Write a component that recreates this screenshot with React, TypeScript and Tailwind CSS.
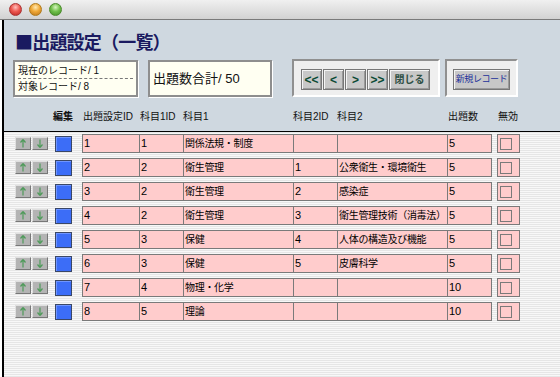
import React from 'react';

const rows = [
  { id: '1', s1: '1', n1: '関係法規・制度', s2: '', n2: '', q: '5' },
  { id: '2', s1: '2', n1: '衛生管理', s2: '1', n2: '公衆衛生・環境衛生', q: '5' },
  { id: '3', s1: '2', n1: '衛生管理', s2: '2', n2: '感染症', q: '5' },
  { id: '4', s1: '2', n1: '衛生管理', s2: '3', n2: '衛生管理技術（消毒法）', q: '5' },
  { id: '5', s1: '3', n1: '保健', s2: '4', n2: '人体の構造及び機能', q: '5' },
  { id: '6', s1: '3', n1: '保健', s2: '5', n2: '皮膚科学', q: '5' },
  { id: '7', s1: '4', n1: '物理・化学', s2: '', n2: '', q: '10' },
  { id: '8', s1: '5', n1: '理論', s2: '', n2: '', q: '10' },
];

function Arrow({ up }: { up: boolean }) {
  return (
    <div className="w-[16px] h-[13px] bg-[#b4b4b4] border border-t-[#e0e0e0] border-l-[#e0e0e0] border-r-[#777] border-b-[#777] flex items-center justify-center">
      <svg width="6" height="9" viewBox="0 0 6 9">
        {up ? (
          <path d="M3 0.5 L0.5 3.5 M3 0.5 L5.5 3.5 M3 0.5 V8.5" stroke="#4f9a5a" strokeWidth="1.2" fill="none" />
        ) : (
          <path d="M3 8.5 L0.5 5.5 M3 8.5 L5.5 5.5 M3 8.5 V0.5" stroke="#4f9a5a" strokeWidth="1.2" fill="none" />
        )}
      </svg>
    </div>
  );
}

function Cell({ w, text, first, jp }: { w: string; text: string; first?: boolean; jp?: boolean }) {
  return (
    <div className={`${w} ${first ? '' : '-ml-px'} h-[19px] bg-[#ffcccc] border border-[#7a7a7a] flex items-center pl-[1px] ${jp ? 'text-[10px] tracking-[-0.3px]' : 'text-[11px]'} leading-none text-black whitespace-nowrap overflow-hidden`}>
      {text}
    </div>
  );
}

function NavBtn({ label, w, small }: { label: string; w: string; small?: boolean }) {
  return (
    <div className={`${w} h-[21px] bg-[#c8c8c8] border border-[#777] shadow-[inset_1px_1px_0_#f4f4f4,inset_-1px_-1px_0_#9a9a9a] flex items-center justify-center whitespace-nowrap ${small ? 'text-[10px] text-[#2f4f45]' : 'text-[12px] text-[#0b4a34]'} font-bold leading-none`}>
      {label}
    </div>
  );
}

export default function App() {
  return (
    <div className="w-[560px] h-[377px] overflow-hidden bg-white font-['Liberation_Sans','Noto_Sans_CJK_JP',sans-serif]">
      {/* title bar */}
      <div className="h-[20px] border-b border-[#7a7a7a] bg-[linear-gradient(to_bottom,#f0f0f0,#d2d2d2)] flex items-center pl-[9px] gap-[7px]">
        <div className="w-[13px] h-[13px] rounded-full border border-[#a33] bg-[radial-gradient(circle_at_50%_30%,#ffc0bc_0%,#ee5a52_45%,#b8221c_100%)]" />
        <div className="w-[13px] h-[13px] rounded-full border border-[#b07a1a] bg-[radial-gradient(circle_at_50%_30%,#ffe9b0_0%,#f0a938_45%,#b9721a_100%)]" />
        <div className="w-[13px] h-[13px] rounded-full border border-[#4a8a2a] bg-[radial-gradient(circle_at_50%_30%,#d8f5c0_0%,#72c14c_45%,#3f8a22_100%)]" />
      </div>

      <div className="ml-[2px] border-l-2 border-black h-[357px]">
        {/* header area */}
        <div className="h-[112px] bg-[#cfd8e0] border-b border-black pt-[9px]">
          <div className="pl-[11px] h-[24px] flex items-center text-[18px] font-bold text-[#1a1a60] leading-none font-['Noto_Sans_CJK_JP',sans-serif] tracking-[-0.8px]">
            ■出題設定（一覧）
          </div>
          <div className="flex items-start mt-[6px] pl-[9px]">
            <div className="mt-[1px] w-[125px] h-[37px] bg-[#fffff2] border-2 border-[#8e8e8e] shadow-[1px_1px_0_#ffffff] px-[3px] flex flex-col text-[10px] leading-none text-[#111] whitespace-pre">
              <div className="h-[16px] flex items-center pt-[1px]">{'現在のレコード/ 1'}</div>
              <div className="border-t border-dashed border-[#777]" />
              <div className="flex-1 flex items-center">{'対象レコード/ 8'}</div>
            </div>
            <div className="mt-[1px] ml-[10px] w-[124px] h-[37px] bg-[#fffff2] border-2 border-[#8e8e8e] shadow-[1px_1px_0_#ffffff] pl-[3px] flex items-center text-[13px] leading-none text-[#111] whitespace-pre">
              {'出題数合計/ 50'}
            </div>
            <div className="ml-[20px] w-[148px] h-[38px] bg-[#efefef] border-2 border-t-[#909090] border-l-[#909090] border-r-white border-b-white pl-[7px] pt-[8px] flex gap-[1px]">
              <NavBtn label="<<" w="w-[21px]" />
              <NavBtn label="<" w="w-[21px]" />
              <NavBtn label=">" w="w-[21px]" />
              <NavBtn label=">>" w="w-[21px]" />
              <NavBtn label="閉じる" w="w-[41px]" small />
            </div>
            <div className="ml-[5px] w-[73px] h-[38px] bg-[#efefef] border-2 border-t-[#909090] border-l-[#909090] border-r-white border-b-white pl-[6px] pt-[8px] flex">
              <div className="w-[57px] h-[21px] bg-[#c8c8c8] border border-[#777] shadow-[inset_1px_1px_0_#f4f4f4,inset_-1px_-1px_0_#9a9a9a] flex items-center justify-center whitespace-nowrap text-[9px] tracking-[-0.4px] text-[#23309a] leading-none">
                新規レコード
              </div>
            </div>
          </div>
          <div className="flex mt-[14px] text-[10px] leading-[12px] text-[#111] whitespace-nowrap">
            <div className="w-[49px]" />
            <div className="w-[30px] font-bold">編集</div>
            <div className="w-[57px]">出題設定ID</div>
            <div className="w-[43px]">科目1ID</div>
            <div className="w-[110px]">科目1</div>
            <div className="w-[44px]">科目2ID</div>
            <div className="w-[111px]">科目2</div>
            <div className="w-[50px]">出題数</div>
            <div>無効</div>
          </div>
        </div>

        {/* rows */}
        <div className="h-[245px] pt-[2px] bg-[repeating-linear-gradient(to_bottom,#e6e6e6_0px,#e6e6e6_1px,#f8f8f8_1px,#f8f8f8_2px)] flex flex-col gap-[5px]">
          {rows.map((r) => (
            <div key={r.id} className="flex items-center h-[19px] pl-[11px]">
              <div className="flex gap-[1px]">
                <Arrow up />
                <Arrow up={false} />
              </div>
              <div className="ml-[7px] w-[17px] h-[16px] bg-[#3c6df7] border border-[#3a4766] shadow-[inset_1px_1px_0_#6f95ff]" />
              <div className="ml-[10px] flex">
                <Cell first w="w-[58px]" text={r.id} />
                <Cell w="w-[45px]" text={r.s1} />
                <Cell w="w-[111px]" text={r.n1} jp />
                <Cell w="w-[45px]" text={r.s2} />
                <Cell w="w-[111px]" text={r.n2} jp />
                <Cell w="w-[45px]" text={r.q} />
              </div>
              <div className="ml-[5px] w-[23px] h-[19px] bg-[#ffcccc] border border-[#7a7a7a] flex items-center pl-[2px]">
                <div className="w-[12px] h-[12px] border border-[#7a7a7a] bg-[#ffcccc]" />
              </div>
            </div>
          ))}
        </div>
      </div>
    </div>
  );
}
